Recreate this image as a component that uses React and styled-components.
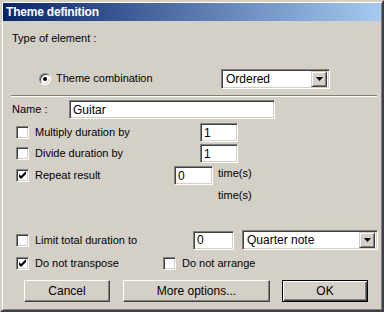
import styled, { createGlobalStyle } from 'styled-components'

const GlobalStyle = createGlobalStyle`
  html, body {
    margin: 0;
    padding: 0;
    background: #d4d0c8;
  }
  body {
    font-family: "Liberation Sans", Arial, sans-serif;
    font-size: 11px;
    color: #000;
  }
`

const sunken = `
  border: 1px solid;
  border-color: #808080 #ffffff #ffffff #808080;
  box-shadow: inset 1px 1px #404040, inset -1px -1px #d4d0c8;
`

export default function App () {
  return (
    <>
      <GlobalStyle />
      <Window>
        <TitleBar>Theme definition</TitleBar>
        <Body>
          <Row $h={14} $mt={10}>
            <Text>Type of element :</Text>
          </Row>

          <Row $h={19} $mt={24} $pl={27}>
            <Field $w={182}>
              <Radio />
              <Text $ml={5}>Theme combination</Text>
            </Field>
            <Select $w={109} value='Ordered' />
          </Row>

          <Separator />

          <Row $h={19} $mt={3}>
            <Field $w={57}>
              <Text>Name :</Text>
            </Field>
            <Input $w={206}>Guitar</Input>
          </Row>

          <Row $h={19} $mt={4} $pl={4}>
            <Field $w={184}>
              <Checkbox />
              <Text $ml={6}>Multiply duration by</Text>
            </Field>
            <Input $w={38}>1</Input>
          </Row>

          <Row $h={19} $mt={2} $pl={4}>
            <Field $w={184}>
              <Checkbox />
              <Text $ml={6}>Divide duration by</Text>
            </Field>
            <Input $w={38}>1</Input>
          </Row>

          <Row $h={19} $mt={3} $pl={4}>
            <Field $w={158}>
              <Checkbox checked />
              <Text $ml={6}>Repeat result</Text>
            </Field>
            <Input $w={39}>0</Input>
            <Unit>time(s)</Unit>
          </Row>

          <Row $h={12} $mt={4} $pl={206}>
            <Text>time(s)</Text>
          </Row>

          <Row $h={20} $mt={29} $pl={4}>
            <Field $w={177}>
              <Checkbox />
              <Text $ml={6}>Limit total duration to</Text>
            </Field>
            <Input $w={41}>0</Input>
            <Select $w={136} $ml={8} value='Quarter note' />
          </Row>

          <Row $h={19} $mt={4} $pl={4}>
            <Field $w={147}>
              <Checkbox checked />
              <Text $ml={6}>Do not transpose</Text>
            </Field>
            <Field>
              <Checkbox />
              <Text $ml={6}>Do not arrange</Text>
            </Field>
          </Row>

          <ButtonBar>
            <Button $w={86}>Cancel</Button>
            <Button $w={147} $ml={13}>More options...</Button>
            <Button $w={86} $ml={12} $default>OK</Button>
          </ButtonBar>
        </Body>
      </Window>
    </>
  )
}

function Checkbox ({ checked }) {
  return (
    <CheckBox>
      {checked && (
        <svg width='9' height='9' viewBox='0 0 9 9'>
          <path d='M1 3 L1 6 L3 8 L8 3 L8 0 L3 5 Z' fill='#000' />
        </svg>
      )}
    </CheckBox>
  )
}

function Select ({ value, $w, $ml }) {
  return (
    <SelectBox $w={$w} $ml={$ml}>
      <SelectValue>{value}</SelectValue>
      <ArrowButton>
        <svg width='7' height='4' viewBox='0 0 7 4'>
          <path d='M0 0 H7 L3.5 4 Z' fill='#000' />
        </svg>
      </ArrowButton>
    </SelectBox>
  )
}

const Window = styled.div`
  width: 384px;
  height: 312px;
  box-sizing: border-box;
  background: #d4d0c8;
  border: 2px solid;
  border-color: #d4d0c8 #404040 #404040 #d4d0c8;
  box-shadow: inset 1px 1px #ffffff, inset -1px -1px #808080;
  padding: 1px;
  display: flex;
  flex-direction: column;
`

const TitleBar = styled.div`
  height: 18px;
  display: flex;
  align-items: center;
  padding-left: 3px;
  background: linear-gradient(to right, #0a246a, #a6caf0);
  color: #fff;
  font-weight: bold;
  font-size: 12px;
  letter-spacing: -0.2px;
`

const Body = styled.div`
  flex: 1;
  padding-left: 9px;
  display: flex;
  flex-direction: column;
`

const Row = styled.div`
  display: flex;
  align-items: center;
  height: ${p => p.$h}px;
  margin-top: ${p => p.$mt}px;
  padding-left: ${p => p.$pl || 0}px;
`

const Field = styled.div`
  display: flex;
  align-items: center;
  width: ${p => (p.$w ? `${p.$w}px` : 'auto')};
  flex-shrink: 0;
`

const Text = styled.span`
  margin-left: ${p => p.$ml || 0}px;
  white-space: nowrap;
  line-height: 13px;
`

const Unit = styled.span`
  align-self: flex-start;
  margin-left: 5px;
  margin-top: 1px;
  line-height: 13px;
`

const Separator = styled.div`
  height: 1px;
  width: 366px;
  margin: 7px 0 0 -1px;
  background: #808080;
  border-bottom: 1px solid #ffffff;
`

const Input = styled.div`
  ${sunken}
  box-sizing: border-box;
  width: ${p => p.$w}px;
  height: 19px;
  background: #fff;
  padding: 0 3px;
  display: flex;
  align-items: center;
  font-size: 12px;
`

const CheckBox = styled.div`
  ${sunken}
  width: 13px;
  height: 13px;
  box-sizing: border-box;
  background: #fff;
  display: flex;
  align-items: center;
  justify-content: center;
  flex-shrink: 0;
`

const Radio = styled.div`
  width: 12px;
  height: 12px;
  box-sizing: border-box;
  border-radius: 50%;
  border: 1px solid;
  border-color: #808080 #ffffff #ffffff #808080;
  box-shadow: inset 1px 1px #404040, inset -1px -1px #d4d0c8;
  background: #fff;
  display: flex;
  align-items: center;
  justify-content: center;
  flex-shrink: 0;

  &::after {
    content: '';
    width: 4px;
    height: 4px;
    border-radius: 50%;
    background: #000;
  }
`

const SelectBox = styled.div`
  ${sunken}
  box-sizing: border-box;
  width: ${p => p.$w}px;
  height: 20px;
  margin-left: ${p => p.$ml || 0}px;
  background: #fff;
  display: flex;
  align-items: center;
  padding: 2px;
`

const SelectValue = styled.span`
  flex: 1;
  padding-left: 2px;
  font-size: 12px;
  white-space: nowrap;
`

const ArrowButton = styled.div`
  width: 16px;
  height: 16px;
  box-sizing: border-box;
  background: #d4d0c8;
  border: 1px solid;
  border-color: #d4d0c8 #404040 #404040 #d4d0c8;
  box-shadow: inset 1px 1px #ffffff, inset -1px -1px #808080;
  display: flex;
  align-items: center;
  justify-content: center;
`

const ButtonBar = styled.div`
  display: flex;
  margin-top: 7px;
  padding-left: 12px;
`

const Button = styled.div`
  box-sizing: border-box;
  width: ${p => p.$w}px;
  height: 22px;
  margin-left: ${p => p.$ml || 0}px;
  display: flex;
  align-items: center;
  justify-content: center;
  font-size: 12px;
  background: #d4d0c8;
  border: 1px solid;
  border-color: ${p => (p.$default ? '#000' : '#ffffff #404040 #404040 #ffffff')};
  box-shadow: ${p => (p.$default
    ? 'inset 1px 1px #ffffff, inset -1px -1px #404040, inset -2px -2px #808080'
    : 'inset -1px -1px #808080')};
`
